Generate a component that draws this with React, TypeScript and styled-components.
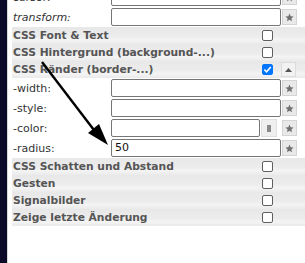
import React from "react";
import styled, { createGlobalStyle } from "styled-components";

const Global = createGlobalStyle`
  html, body { margin: 0; padding: 0; background: #fff; }
  body { font-family: "DejaVu Sans", Verdana, sans-serif; overflow: hidden; }
`;

const Frame = styled.div`
  position: relative;
  display: flex;
  width: 305px;
  height: 263px;
  overflow: hidden;
`;

const Strip = styled.div`
  width: 7px;
  flex: none;
  background: #0b0b29;
  border-right: 1px solid #d8d8d8;
`;

const Panel = styled.div`
  flex: 1;
  margin-left: 4px;
  display: flex;
  flex-direction: column;
`;

const PropRow = styled.div<{ $first?: boolean }>`
  display: flex;
  align-items: center;
  height: 20px;
  flex: none;
  margin-top: ${(p) => (p.$first ? "-13px" : "0")};
`;

const Label = styled.div<{ $italic?: boolean }>`
  width: 98px;
  padding-left: 1px;
  font-size: 11px;
  color: #333;
  font-style: ${(p) => (p.$italic ? "italic" : "normal")};
  white-space: nowrap;
`;

const Field = styled.div`
  width: 170px;
  height: 18px;
  display: flex;
  align-items: center;
`;

const Input = styled.div`
  flex: 1;
  height: 18px;
  box-sizing: border-box;
  border: 1px solid #767676;
  border-radius: 2px;
  background: #fff;
  font-size: 11px;
  color: #111;
  padding-left: 3px;
  line-height: 16px;
`;

const ColorBtn = styled.div`
  width: 16px;
  height: 18px;
  margin-left: 1px;
  margin-right: 4px;
  box-sizing: border-box;
  background: #efefef;
  border: 1px solid #e0e0e0;
  display: flex;
  align-items: center;
  justify-content: center;
  &::after {
    content: "";
    width: 4px;
    height: 7px;
    background: #8a8a8a;
  }
`;

const SmallBtn = styled.div`
  width: 15px;
  height: 16px;
  margin-left: 1px;
  box-sizing: border-box;
  background: #e9e9e9;
  border: 1px solid #d4d4d4;
  display: flex;
  align-items: center;
  justify-content: center;
`;

const HeaderRow = styled.div`
  display: grid;
  grid-template-columns: 250px 19px 15px;
  align-items: center;
  height: 17px;
  flex: none;
  background: linear-gradient(#e8e8e8 0%, #ececec 55%, #f4f4f4 75%, #eaeaea 100%);
`;

const Title = styled.div`
  padding-left: 1px;
  font-size: 10.7px;
  font-weight: bold;
  color: #555;
  white-space: nowrap;
`;

const Check = styled.div<{ $on?: boolean }>`
  width: 11px;
  height: 11px;
  box-sizing: border-box;
  border-radius: 2px;
  border: 1px solid ${(p) => (p.$on ? "#0075ff" : "#5f5f5f")};
  background: ${(p) => (p.$on ? "#0075ff" : "#fff")};
  display: flex;
  align-items: center;
  justify-content: center;
`;

const UpBtn = styled(SmallBtn)`
  margin-left: 0;
  height: 15px;
  background: #f2f2f2;
  border-color: #dcdcdc;
`;

const Arrow = styled.svg`
  position: absolute;
  left: 0;
  top: 0;
  pointer-events: none;
`;

const Star = () => (
  <svg width="9" height="9" viewBox="0 0 10 10">
    <polygon
      points="5,0.6 6.3,3.6 9.5,3.9 7.1,6 7.8,9.2 5,7.5 2.2,9.2 2.9,6 0.5,3.9 3.7,3.6"
      fill="#707070"
    />
  </svg>
);

const Tick = () => (
  <svg width="9" height="9" viewBox="0 0 10 10">
    <polyline points="1.5,5.2 4,7.6 8.6,2.2" fill="none" stroke="#fff" strokeWidth="1.8" />
  </svg>
);

const Tri = () => (
  <svg width="7" height="4" viewBox="0 0 7 4">
    <polygon points="3.5,0 7,4 0,4" fill="#555" />
  </svg>
);

type Prop = { label: string; italic?: boolean; value?: string; color?: boolean; first?: boolean };

const Property = ({ label, italic, value, color, first }: Prop) => (
  <PropRow $first={first}>
    <Label $italic={italic}>{label}</Label>
    <Field>
      <Input>{value}</Input>
      {color && <ColorBtn />}
    </Field>
    <SmallBtn>
      <Star />
    </SmallBtn>
  </PropRow>
);

const Header = ({ title, on, up }: { title: string; on?: boolean; up?: boolean }) => (
  <HeaderRow>
    <Title>{title}</Title>
    <Check $on={on}>{on && <Tick />}</Check>
    {up ? (
      <UpBtn>
        <Tri />
      </UpBtn>
    ) : (
      <span />
    )}
  </HeaderRow>
);

export default function App() {
  return (
    <>
      <Global />
      <Frame>
        <Strip />
        <Panel>
          <Property first italic label="cursor:" />
          <Property italic label="transform:" />
          <Header title="CSS Font & Text" />
          <Header title="CSS Hintergrund (background-...)" />
          <Header title="CSS Ränder (border-...)" on up />
          <Property label="-width:" />
          <Property label="-style:" />
          <Property label="-color:" color />
          <Property label="-radius:" value="50" />
          <Header title="CSS Schatten und Abstand" />
          <Header title="Gesten" />
          <Header title="Signalbilder" />
          <Header title="Zeige letzte Änderung" />
        </Panel>
        <Arrow width="305" height="263">
          <line x1="42" y1="62" x2="97" y2="134" stroke="#000" strokeWidth="2.4" />
          <polygon points="108,145 88,133 99,124" fill="#000" />
        </Arrow>
      </Frame>
    </>
  );
}
